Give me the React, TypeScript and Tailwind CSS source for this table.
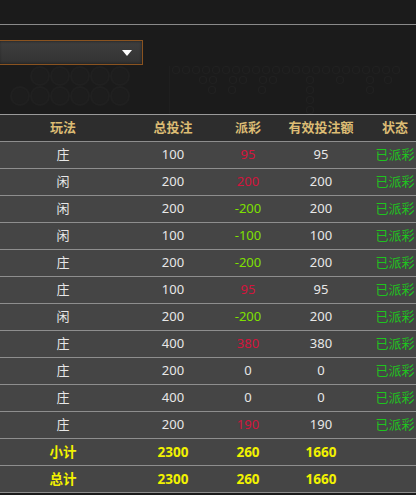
import React from "react";

type Row = {
  play: string;
  bet: string;
  payout: string;
  payoutColor: string;
  valid: string;
};

const RED = "text-[#d4143c]";
const LIME = "text-[#7ee000]";

const rows: Row[] = [
  { play: "庄", bet: "100", payout: "95", payoutColor: RED, valid: "95" },
  { play: "闲", bet: "200", payout: "200", payoutColor: RED, valid: "200" },
  { play: "闲", bet: "200", payout: "-200", payoutColor: LIME, valid: "200" },
  { play: "闲", bet: "100", payout: "-100", payoutColor: LIME, valid: "100" },
  { play: "庄", bet: "200", payout: "-200", payoutColor: LIME, valid: "200" },
  { play: "庄", bet: "100", payout: "95", payoutColor: RED, valid: "95" },
  { play: "闲", bet: "200", payout: "-200", payoutColor: LIME, valid: "200" },
  { play: "庄", bet: "400", payout: "380", payoutColor: RED, valid: "380" },
  { play: "庄", bet: "200", payout: "0", payoutColor: "text-[#e6e6e6]", valid: "0" },
  { play: "庄", bet: "400", payout: "0", payoutColor: "text-[#e6e6e6]", valid: "0" },
  { play: "庄", bet: "200", payout: "190", payoutColor: RED, valid: "190" },
];

const cols = "grid grid-cols-[126px_94px_56px_90px_58px] w-[424px]";

function RoadDecor() {
  // faint roadmap circles behind the filter area
  const big = [
    [40, 10], [60, 10], [80, 10], [100, 10], [120, 10],
    [20, 30], [40, 30], [60, 30], [80, 30], [100, 30], [120, 30],
  ];
  const small: number[][] = [];
  for (let i = 0; i < 23; i++) small.push([176 + i * 10, 4]);
  [[203, 14], [213, 14], [233, 14], [243, 14], [263, 14], [273, 14], [310, 14], [340, 14], [370, 14], [388, 14],
    [212, 24], [232, 24], [262, 24], [310, 24], [370, 24], [310, 34], [310, 44]].forEach((p) => small.push(p));
  return (
    <svg width="416" height="48" className="block">
      <line x1="169.5" y1="0" x2="169.5" y2="48" stroke="#1f1f1f" />
      {big.map(([x, y], i) => (
        <circle key={i} cx={x} cy={y} r="9" fill="#1d1d1d" stroke="#202020" strokeWidth="2" />
      ))}
      {small.map(([x, y], i) => (
        <circle key={"s" + i} cx={x} cy={y} r="3.5" fill="none" stroke="#212121" strokeWidth="1.2" />
      ))}
    </svg>
  );
}

export default function App() {
  return (
    <div
      className="w-[416px] h-[495px] overflow-hidden bg-[#1b1b1b] text-[13px]"
      style={{ fontFamily: '"Noto Sans", "Noto Sans CJK SC", sans-serif' }}
    >
      <div className="h-[24px]" />
      <div className="h-px bg-[#8a8a8a]" />
      <div className="h-[15px]" />

      {/* select */}
      <div className="w-[145px] h-[25px] ml-[-2px] border border-[#8a5320] bg-gradient-to-b from-[#3e3e3e] to-[#333333] shadow-[inset_0_0_3px_rgba(0,0,0,0.6)] flex items-center justify-end pr-[10px]">
        <svg width="10" height="6" viewBox="0 0 10 6">
          <path d="M0 0 H10 L5 6 Z" fill="#ffffff" />
        </svg>
      </div>

      <div className="h-[1px]" />
      <RoadDecor />
      <div className="h-px bg-[#9a9a9a]" />

      {/* table */}
      <div className={`${cols} h-[26px] bg-[#2d2d2d] items-center text-[#dcbc74] font-bold text-center`}>
        <div>玩法</div>
        <div>总投注</div>
        <div>派彩</div>
        <div>有效投注额</div>
        <div>状态</div>
      </div>

      {rows.map((r, i) => (
        <div
          key={i}
          className={`${cols} h-[27px] bg-[#454545] border-t border-[#8e8e8e] items-center text-center text-[#e8e8e8]`}
        >
          <div>{r.play}</div>
          <div>{r.bet}</div>
          <div className={r.payoutColor}>{r.payout}</div>
          <div>{r.valid}</div>
          <div className="text-[#1ec41e]">已派彩</div>
        </div>
      ))}

      {["小计", "总计"].map((label) => (
        <div
          key={label}
          className={`${cols} h-[27px] bg-[#454545] border-t border-[#8e8e8e] items-center text-center text-[#f2f200] font-bold text-[13.5px]`}
        >
          <div>{label}</div>
          <div>2300</div>
          <div>260</div>
          <div>1660</div>
          <div></div>
        </div>
      ))}
      <div className="h-px bg-[#8e8e8e]" />
    </div>
  );
}
